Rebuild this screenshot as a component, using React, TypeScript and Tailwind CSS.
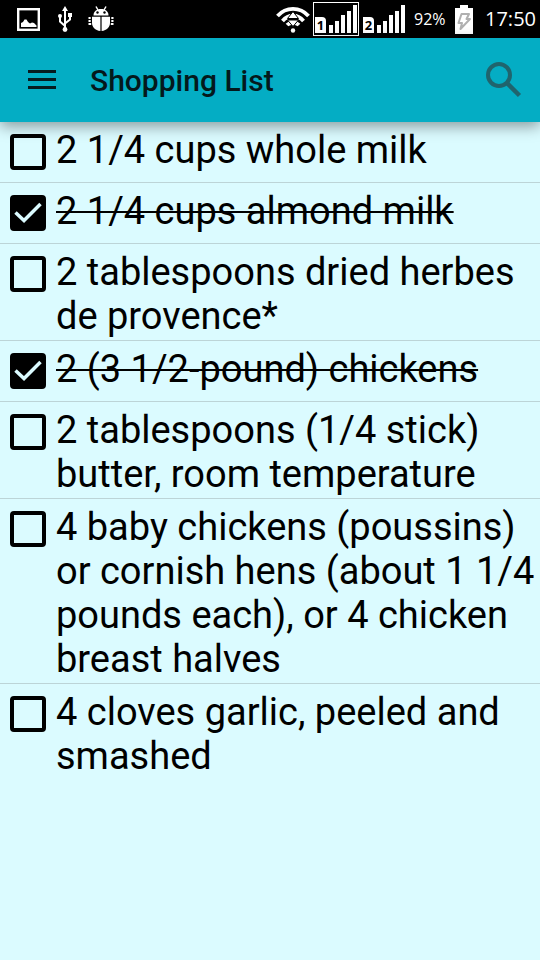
import { useState } from "react";

type Item = { id: string; text: string; done: boolean };

const initialItems: Item[] = [
  { id: "whole-milk", text: "2 1/4 cups whole milk", done: false },
  { id: "almond-milk", text: "2 1/4 cups almond milk", done: true },
  { id: "herbes", text: "2 tablespoons dried herbes de provence*", done: false },
  { id: "chickens", text: "2 (3 1/2-pound) chickens", done: true },
  { id: "butter", text: "2 tablespoons (1/4 stick) butter, room temperature", done: false },
  {
    id: "poussins",
    text: "4 baby chickens (poussins) or cornish hens (about 1 1/4 pounds each), or 4 chicken breast halves",
    done: false,
  },
  { id: "garlic", text: "4 cloves garlic, peeled and smashed", done: false },
];

function PictureIcon() {
  return (
    <svg width="24" height="24" viewBox="0 0 24 24" aria-hidden="true">
      <rect x="1.2" y="2.2" width="20.600" height="20.600" fill="none" stroke="#fff" strokeWidth="2.400" />
      <path d="M4 20v-4l2-1 1.500-2.500h2L11 15l2 1.500 2-1 2 .5 2.500 2.500V20z" fill="#fff" />
    </svg>
  );
}

function UsbIcon() {
  return (
    <svg width="14" height="26" viewBox="0 0 14 26" aria-hidden="true">
      <g fill="none" stroke="#fff" strokeWidth="2">
        <path d="M7 4v18M7 20L2 15.500v-5M7 17.500l5-4V9" />
      </g>
      <path d="M7 0l3 5H4z" fill="#fff" />
      <circle cx="2" cy="10" r="2" fill="#fff" />
      <rect x="10" y="7" width="4" height="4" fill="#fff" />
      <circle cx="7" cy="23.500" r="2.400" fill="#fff" />
    </svg>
  );
}

function BugIcon() {
  return (
    <svg width="26" height="26" viewBox="0 0 26 26" aria-hidden="true">
      <path d="M5.500 9.500C5.500 5.500 8.500 3 13 3s7.500 2.500 7.500 6.500z" fill="#fff" />
      <path d="M8 .5l2 3.500M18 .5l-2 3.500" stroke="#fff" strokeWidth="1.500" />
      <circle cx="9.500" cy="6.500" r="1.200" />
      <circle cx="16.500" cy="6.500" r="1.200" />
      <path
        d="M4 10.800h8.400V25C7 24.500 4 21 4 16.500zM13.600 10.800H22v5.700c0 4.500-3 8-8.400 8.500z"
        fill="#fff"
      />
      <path
        d="M.5 12h2.200M.5 15h2.200M.5 18h2.700M23.300 12h2.200M23.300 15h2.200M22.800 18h2.700"
        stroke="#fff"
        strokeWidth="2"
      />
    </svg>
  );
}

function WifiIcon() {
  return (
    <svg width="34" height="28" viewBox="0 0 34 28" aria-hidden="true">
      <g fill="none" stroke="#fff" strokeWidth="3.800">
        <path d="M1.500 11C10 1.500 24 1.500 32.500 11" />
        <path d="M6.500 16c6-7 15-7 21 0" />
        <path d="M11 20c3-3 9-3 12 0" />
      </g>
      <path d="M17 6.500l5.500 7h-11z" fill="#fff" stroke="#000" strokeWidth="1" />
      <path d="M17 21.500l-5.500-6.500h11z" fill="#fff" stroke="#000" strokeWidth="1" />
      <circle cx="17" cy="25.500" r="2.200" fill="#fff" />
    </svg>
  );
}

function SignalBars() {
  return (
    <svg width="28" height="28" viewBox="0 0 28 28" fill="#fff" aria-hidden="true">
      <path d="M0 20h4v8H0zM6 16h4v12H6zM12 10h4v18h-4zM18 6h4v22h-4zM24 0h4v28h-4z" />
    </svg>
  );
}

function SimSignal({ sim, active }: { sim: string; active: boolean }) {
  return (
    <div
      className={`flex h-[34px] items-end gap-[3px] border pb-[2px] ${
        active ? "w-[46px] border-white pl-px" : "w-[44px] border-transparent"
      }`}
    >
      <span className="h-4 w-[11px] rounded-tr bg-white text-center font-['Noto_Sans',sans-serif] text-[13px] leading-4 font-bold text-black">
        {sim}
      </span>
      <SignalBars />
    </div>
  );
}

function BatteryIcon() {
  return (
    <svg width="18" height="29" viewBox="0 0 18 29" aria-hidden="true">
      <path d="M5 0h8v3h5v26H0V3h5z" fill="#fff" />
      <path
        d="M6.500 9h7.500l-2.500 5h3.500L5.500 24l1.500-6H3.500z"
        fill="none"
        stroke="#b0b0b0"
        strokeWidth="2"
        strokeLinejoin="round"
      />
    </svg>
  );
}

function StatusBar() {
  return (
    <div className="flex h-[38px] items-center bg-black pr-1 pl-[17px] font-['Open_Sans',sans-serif] text-white">
      <PictureIcon />
      <div className="ml-[17px]">
        <UsbIcon />
      </div>
      <div className="ml-4">
        <BugIcon />
      </div>
      <div className="ml-auto flex items-center">
        <WifiIcon />
        <div className="ml-[3px]">
          <SimSignal sim="1" active />
        </div>
        <div className="ml-[3px]">
          <SimSignal sim="2" active={false} />
        </div>
        <span className="ml-2 w-[34px] text-base leading-5">92%</span>
        <div className="ml-[7px]">
          <BatteryIcon />
        </div>
        <time className="ml-3 w-[51px] text-right text-xl leading-6">17:50</time>
      </div>
    </div>
  );
}

function AppBar() {
  return (
    <header className="relative z-10 flex h-[84px] items-center bg-[#04adc4] pr-4 pl-7 shadow-[0_4px_14px_rgba(0,0,0,0.4)]">
      <button type="button" aria-label="Open menu" className="text-[#061c20]">
        <svg width="28" height="20" viewBox="0 0 28 20" fill="none" stroke="currentColor" strokeWidth="3" aria-hidden="true">
          <path d="M0 1.500h28M0 9.500h28M0 17.500h28" />
        </svg>
      </button>
      <h1 className="ml-[34px] pt-0.5 text-[30px] leading-9 font-medium text-[#04191c]">Shopping List</h1>
      <button type="button" aria-label="Search" className="ml-auto text-[#20646d]">
        <svg width="38" height="38" viewBox="0 0 38 38" fill="none" stroke="currentColor" aria-hidden="true">
          <circle cx="13" cy="14" r="11" strokeWidth="4" />
          <path d="M21.500 22.500L33.500 34.500" strokeWidth="4.500" />
        </svg>
      </button>
    </header>
  );
}

function ListRow({ item, onToggle }: { item: Item; onToggle: () => void }) {
  return (
    <li className="flex min-h-[61px] items-start border-b border-[#bcd4d7] pt-[6px] pb-[2px] pl-[10px] last:border-b-0">
      <span className="mt-[6px] grid shrink-0">
        <input
          id={item.id}
          type="checkbox"
          checked={item.done}
          onChange={onToggle}
          className="peer col-start-1 row-start-1 size-9 appearance-none rounded border-4 border-black checked:bg-black"
        />
        <svg
          viewBox="0 0 36 36"
          className="pointer-events-none invisible col-start-1 row-start-1 size-9 peer-checked:visible"
          fill="none"
          stroke="#dbfbff"
          strokeWidth="3.500"
          aria-hidden="true"
        >
          <path d="M5.500 17.500l8.500 8L30.500 9" />
        </svg>
      </span>
      <label
        htmlFor={item.id}
        className={`ml-[10px] text-[38px] leading-[44px] text-black ${
          item.done ? "line-through decoration-2 [text-decoration-skip-ink:none]" : ""
        }`}
      >
        {item.text}
      </label>
    </li>
  );
}

export default function App() {
  const [items, setItems] = useState(initialItems);
  const toggle = (id: string) =>
    setItems((list) => list.map((it) => (it.id === id ? { ...it, done: !it.done } : it)));

  return (
    <div className="min-h-screen bg-[#dbfbff] font-['Roboto',sans-serif]">
      <StatusBar />
      <AppBar />
      <main>
        <ul>
          {items.map((item) => (
            <ListRow key={item.id} item={item} onToggle={() => toggle(item.id)} />
          ))}
        </ul>
      </main>
    </div>
  );
}
